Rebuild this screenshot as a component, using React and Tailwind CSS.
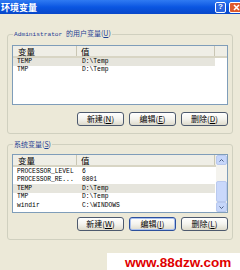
import React from "react";

const userVars = [
  { name: "TEMP", value: "D:\\Temp", sel: true },
  { name: "TMP", value: "D:\\Temp" },
];

const sysVars = [
  { name: "PROCESSOR_LEVEL", value: "6" },
  { name: "PROCESSOR_RE...", value: "0801" },
  { name: "TEMP", value: "D:\\Temp", sel: true },
  { name: "TMP", value: "D:\\Temp" },
  { name: "windir", value: "C:\\WINDOWS" },
];

// XP 风格按钮
function Btn({ text, k, focus }) {
  return (
    <button
      className={`flex h-[14px] w-[47px] items-center justify-center rounded-[3px] border bg-gradient-to-b from-white via-[#f4f3ee] to-[#dedbcc] text-[8px] leading-none text-black font-['Noto_Sans_CJK_SC',sans-serif] ${
        focus ? "border-[#2c4f9c] shadow-[inset_0_0_0_1px_#a9c0ee]" : "border-[#4e5a6e]"
      }`}
    >
      {text}(<u>{k}</u>)
    </button>
  );
}

function Header() {
  return (
    <div className="flex h-[12px] border-b-2 border-[#d8d5c4] bg-[#efeee6] text-[8.5px] leading-none font-['Noto_Sans_CJK_SC',sans-serif]">
      <div className="flex w-[64px] items-center border-r border-[#c9c6b4] pl-[5px]">变量</div>
      <div className="flex w-[138px] items-center border-r border-[#c9c6b4] pl-[4px]">值</div>
    </div>
  );
}

function Row({ r, h }) {
  return (
    <div
      className={`flex w-[202px] items-center text-[6.3px] text-black font-['Liberation_Mono',monospace] ${h} ${
        r.sel ? "bg-[#e6e5dd]" : ""
      }`}
    >
      <div className="w-[64px] truncate pl-[4px]">{r.name}</div>
      <div className="pl-[5px]">{r.value}</div>
    </div>
  );
}

function Legend({ children }) {
  return (
    <legend className="ml-[1px] px-[1px] text-[7px] leading-[8px] text-[#1f3f94] font-['Noto_Sans_CJK_SC',sans-serif]">
      {children}
    </legend>
  );
}

export default function App() {
  return (
    <div className="flex h-[270px] w-[240px] flex-col overflow-hidden bg-[#ece9d8]">
      {/* 标题栏 */}
      <div className="flex h-[14px] shrink-0 items-center bg-gradient-to-b from-[#2f7af2] via-[#0a56e2] to-[#0847c9] pl-[1px]">
        <span className="text-[9px] font-bold leading-none text-white font-['Noto_Sans_CJK_SC',sans-serif]">
          环境变量
        </span>
        <div className="ml-auto mr-[-3px] flex gap-[3px]">
          <div className="flex h-[11px] w-[11px] items-center justify-center rounded-[2px] border border-white bg-[#2d66e0] text-[8px] font-bold leading-none text-white font-['Liberation_Sans',sans-serif]">
            ?
          </div>
          <div className="flex h-[11px] w-[14px] items-center justify-center rounded-[2px] border border-white bg-[#dd5a2e]">
            <svg width="7" height="7" viewBox="0 0 7 7">
              <path d="M1 1L6 6M6 1L1 6" stroke="white" strokeWidth="1.6" />
            </svg>
          </div>
        </div>
      </div>

      <div className="flex flex-col px-[7px] pt-[15px]">
        {/* 用户变量 */}
        <fieldset className="rounded-[3px] border border-[#d0d0bf] px-[4px] pb-[7px]">
          <Legend>
            <span className="text-[6.2px] font-['Liberation_Mono',monospace]">Administrator </span>
            的用户变量(<u>U</u>)
          </Legend>
          <div className="mt-[6px] h-[60px] border border-[#7f9db9] bg-white">
            <Header />
            {userVars.map((r) => (
              <Row key={r.name} r={r} h="h-[7.5px]" />
            ))}
          </div>
          <div className="mt-[7px] flex justify-end gap-[5px]">
            <Btn text="新建" k="N" />
            <Btn text="编辑" k="E" />
            <Btn text="删除" k="D" />
          </div>
        </fieldset>

        {/* 系统变量 */}
        <fieldset className="mt-[6px] rounded-[3px] border border-[#d0d0bf] px-[4px] pb-[8px]">
          <Legend>
            系统变量(<u>S</u>)
          </Legend>
          <div className="mt-[6px] flex h-[59px] border border-[#7f9db9] bg-white">
            <div className="flex-1">
              <Header />
              {sysVars.map((r) => (
                <Row key={r.name} r={r} h="h-[8.5px]" />
              ))}
            </div>
            <div className="flex w-[11px] flex-col bg-[#f4f3ee]">
              <div className="flex h-[10px] items-center justify-center rounded-[2px] border border-[#b9c9ef] bg-[#c6d6fa]">
                <svg width="5" height="3" viewBox="0 0 5 3">
                  <path d="M0.5 2.5L2.5 0.5L4.5 2.5" stroke="#4d6185" strokeWidth="1" fill="none" />
                </svg>
              </div>
              <div className="flex-1" />
              <div className="h-[21px] rounded-[2px] border border-[#b9c9ef] bg-[#c9d8fb]" />
              <div className="flex h-[10px] items-center justify-center rounded-[2px] border border-[#b9c9ef] bg-[#c6d6fa]">
                <svg width="5" height="3" viewBox="0 0 5 3">
                  <path d="M0.5 0.5L2.5 2.5L4.5 0.5" stroke="#4d6185" strokeWidth="1" fill="none" />
                </svg>
              </div>
            </div>
          </div>
          <div className="mt-[4px] flex justify-end gap-[5px]">
            <Btn text="新建" k="W" />
            <Btn text="编辑" k="I" focus />
            <Btn text="删除" k="L" />
          </div>
        </fieldset>
      </div>

      {/* 水印 */}
      <div className="mt-[13px] flex justify-end">
        <div className="h-[19px] w-[133px] bg-white pl-[18px] text-[13.5px] font-bold leading-[19px] text-[#e00000] font-['Liberation_Sans',sans-serif]">
          www.88dzw.com
        </div>
      </div>
    </div>
  );
}
